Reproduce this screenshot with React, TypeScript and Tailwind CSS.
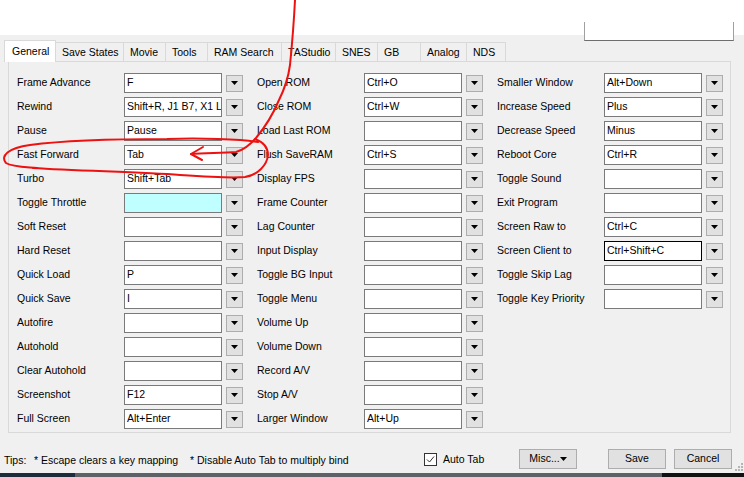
import React from 'react';

type Bind = { label: string; value: string; cyan?: boolean; focus?: boolean };

const COLUMNS: Bind[][] = [
    [
        { label: 'Frame Advance', value: 'F' },
        { label: 'Rewind', value: 'Shift+R, J1 B7, X1 L' },
        { label: 'Pause', value: 'Pause' },
        { label: 'Fast Forward', value: 'Tab' },
        { label: 'Turbo', value: 'Shift+Tab' },
        { label: 'Toggle Throttle', value: '', cyan: true },
        { label: 'Soft Reset', value: '' },
        { label: 'Hard Reset', value: '' },
        { label: 'Quick Load', value: 'P' },
        { label: 'Quick Save', value: 'I' },
        { label: 'Autofire', value: '' },
        { label: 'Autohold', value: '' },
        { label: 'Clear Autohold', value: '' },
        { label: 'Screenshot', value: 'F12' },
        { label: 'Full Screen', value: 'Alt+Enter' },
    ],
    [
        { label: 'Open ROM', value: 'Ctrl+O' },
        { label: 'Close ROM', value: 'Ctrl+W' },
        { label: 'Load Last ROM', value: '' },
        { label: 'Flush SaveRAM', value: 'Ctrl+S' },
        { label: 'Display FPS', value: '' },
        { label: 'Frame Counter', value: '' },
        { label: 'Lag Counter', value: '' },
        { label: 'Input Display', value: '' },
        { label: 'Toggle BG Input', value: '' },
        { label: 'Toggle Menu', value: '' },
        { label: 'Volume Up', value: '' },
        { label: 'Volume Down', value: '' },
        { label: 'Record A/V', value: '' },
        { label: 'Stop A/V', value: '' },
        { label: 'Larger Window', value: 'Alt+Up' },
    ],
    [
        { label: 'Smaller Window', value: 'Alt+Down' },
        { label: 'Increase Speed', value: 'Plus' },
        { label: 'Decrease Speed', value: 'Minus' },
        { label: 'Reboot Core', value: 'Ctrl+R' },
        { label: 'Toggle Sound', value: '' },
        { label: 'Exit Program', value: '' },
        { label: 'Screen Raw to', value: 'Ctrl+C' },
        { label: 'Screen Client to', value: 'Ctrl+Shift+C', focus: true },
        { label: 'Toggle Skip Lag', value: '' },
        { label: 'Toggle Key Priority', value: '' },
    ],
];

const TABS: { name: string; w: string }[] = [
    { name: 'Save States', w: 'w-[68px]' },
    { name: 'Movie', w: 'w-[42px]' },
    { name: 'Tools', w: 'w-[42px]' },
    { name: 'RAM Search', w: 'w-[74px]' },
    { name: 'TAStudio', w: 'w-[54px]' },
    { name: 'SNES', w: 'w-[42px]' },
    { name: 'GB', w: 'w-[43px]' },
    { name: 'Analog', w: 'w-[46px]' },
    { name: 'NDS', w: 'w-[39px]' },
];

const DownArrow = () => (
    <svg width="7" height="4" viewBox="0 0 7 4">
        <path d="M0 0 H7 L3.5 4 Z" fill="#000" />
    </svg>
);

const BindRow: React.FC<{ bind: Bind }> = ({ bind }) => (
    <div className="h-[24px] flex items-center">
        <div className="w-[107px] shrink-0 whitespace-nowrap">{bind.label}</div>
        <div
            className={`w-[98px] h-[20px] shrink-0 border px-[2px] flex items-center whitespace-nowrap overflow-hidden ${bind.focus ? 'border-black' : 'border-[#7a7a7a]'} ${bind.cyan ? 'bg-[#c0ffff]' : 'bg-white'}`}
        >
            {bind.value}
        </div>
        <div className="ml-[4px] w-[17px] h-[17px] shrink-0 bg-[#e1e1e1] border border-[#adadad] flex items-center justify-center">
            <DownArrow />
        </div>
    </div>
);

const Button: React.FC<{ children: React.ReactNode; className?: string }> = ({ children, className = '' }) => (
    <div className={`h-[20px] w-[58px] shrink-0 bg-[#e1e1e1] border border-[#adadad] flex items-center justify-center ${className}`}>
        {children}
    </div>
);

export default function App() {
    return (
        <div className="relative w-[744px] h-[477px] overflow-hidden bg-white text-black text-[10.5px] font-['Liberation_Sans',Arial,sans-serif]">
            {/* window behind, top area */}
            <div className="h-[35px] bg-white relative">
                <div className="absolute left-[584px] top-[22px] w-[150px] h-[19px] border-x border-b border-x-[#a0a0a0] border-b-[#6e6e6e] bg-white z-10" />
            </div>

            <div className="h-[438px] bg-[#f0f0f0] flex flex-col">
                {/* tab strip */}
                <div className="h-[26px] flex items-end pl-[4px]">
                    <div className="relative z-10 w-[52px] h-[22px] mb-[-1px] bg-white border-x border-t border-[#d9d9d9] pl-[7px] pt-[3px] whitespace-nowrap">
                        General
                    </div>
                    {TABS.map((t) => (
                        <div
                            key={t.name}
                            className={`${t.w} h-[19px] border-t border-r border-[#d9d9d9] pl-[6px] pt-[2px] flex items-center whitespace-nowrap`}
                        >
                            {t.name}
                        </div>
                    ))}
                </div>

                {/* tab page */}
                <div className="ml-[8px] w-[723px] h-[372px] border border-[#d9d9d9] pt-[9px] pl-[8px] flex">
                    {COLUMNS.map((col, ci) => (
                        <div key={ci} className="w-[240px] shrink-0 flex flex-col">
                            {col.map((b) => (
                                <BindRow key={b.label} bind={b} />
                            ))}
                        </div>
                    ))}
                </div>

                {/* bottom bar */}
                <div className="h-[40px] pt-[12px] flex items-center">
                    <div className="w-[424px] shrink-0 pl-[4px] pt-[3px] flex whitespace-nowrap">
                        <span className="w-[30px]">Tips:</span>
                        <span className="w-[156px]">* Escape clears a key mapping</span>
                        <span>* Disable Auto Tab to multiply bind</span>
                    </div>
                    <div className="w-[95px] shrink-0 flex items-center">
                        <div className="w-[13px] h-[13px] border border-[#333] bg-white flex items-center justify-center">
                            <svg width="11" height="11" viewBox="0 0 11 11">
                                <path d="M2 5.5 L4.5 8 L9 2.5" fill="none" stroke="#333" strokeWidth="1" />
                            </svg>
                        </div>
                        <span className="ml-[6px] pt-[1px]">Auto Tab</span>
                    </div>
                    <Button>
                        <span>Misc...</span>
                        <DownArrow />
                    </Button>
                    <Button className="ml-[31px]">Save</Button>
                    <Button className="ml-[8px]">Cancel</Button>
                </div>
            </div>

            {/* taskbar sliver */}
            <div className="h-[4px] flex">
                <div className="w-[75px] bg-[#1d2c3a]" />
                <div className="w-[587px] bg-[#5e6166]" />
                <div className="flex-1 bg-[#111]" />
            </div>

            {/* resize grip */}
            <svg className="absolute left-[735px] top-[462px]" width="9" height="10" viewBox="0 0 9 10">
                <g fill="#b5b5b5">
                    <rect x="6" y="1" width="2" height="2" />
                    <rect x="3" y="4" width="2" height="2" />
                    <rect x="6" y="4" width="2" height="2" />
                    <rect x="0" y="7" width="2" height="2" />
                    <rect x="3" y="7" width="2" height="2" />
                    <rect x="6" y="7" width="2" height="2" />
                </g>
            </svg>

            {/* red hand-drawn annotation */}
            <svg className="absolute inset-0 pointer-events-none z-20" width="744" height="477" viewBox="0 0 744 477">
                <g fill="none" stroke="#ee1111" strokeWidth="2" strokeLinecap="round" strokeLinejoin="round">
                    <path d="M295 0 C294 20 292 45 290 65 C288 80 284 90 279 100 C274 112 266 126 256 138 C250 145 244 150 236 152 C222 153 205 153 191 154" />
                    <path d="M203 147 L191 154 L202 160" />
                    <path d="M258 142 C240 139 200 138 167 139 C120 139 60 141 30 145 C8 148 0 156 6 163 C12 167 25 167 37 168" />
                    <path d="M33 168 C80 171 140 172 180 175 C210 177 235 178 245 177 C258 175 267 165 268 155 C268 147 263 142 255 139" />
                </g>
            </svg>
        </div>
    );
}
